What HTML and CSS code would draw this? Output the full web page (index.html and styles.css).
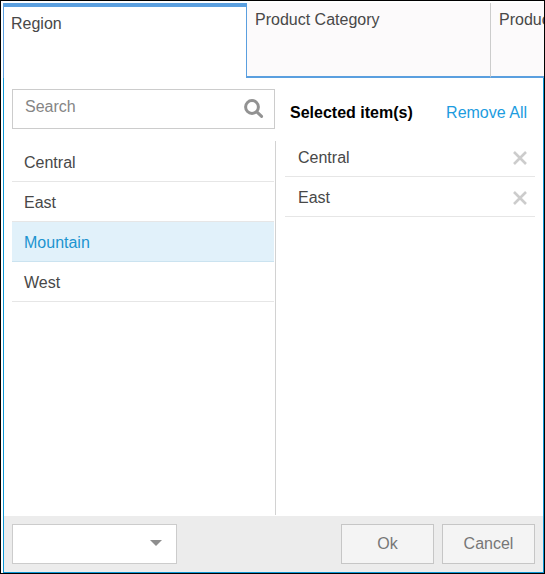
FILE: index.html
```html
<!DOCTYPE html>
<html lang="en">
<head>
<meta charset="utf-8">
<title>Region filter</title>
<link rel="stylesheet" href="styles.css">
</head>
<body>
<div class="frame">
  <div class="tabs" role="tablist">
    <button class="tab tab-active" type="button" role="tab" aria-selected="true">Region</button>
    <button class="tab" type="button" role="tab" aria-selected="false">Product Category</button>
    <button class="tab" type="button" role="tab" aria-selected="false">Product</button>
  </div>
  <form class="panel">
    <div class="columns">
      <section class="available">
        <div class="search">
          <input class="search-input" type="text" placeholder="Search" aria-label="Search">
          <svg class="search-icon" viewBox="0 0 20 20" aria-hidden="true"><circle cx="8" cy="8" r="6.4"/><path d="M12.8 12.8L17.6 17.4"/></svg>
        </div>
        <ul class="options">
          <li class="option">Central</li>
          <li class="option">East</li>
          <li class="option option-active">Mountain</li>
          <li class="option">West</li>
        </ul>
      </section>
      <section class="selected">
        <header class="selected-head">
          <h2 class="selected-title">Selected item(s)</h2>
          <a class="remove-all" href="#">Remove All</a>
        </header>
        <ul class="chosen">
          <li class="chosen-item">Central
            <button class="remove" type="button" aria-label="Remove Central"><svg viewBox="0 0 14 14" aria-hidden="true"><path d="M1 1L13 13M13 1L1 13"/></svg></button>
          </li>
          <li class="chosen-item">East
            <button class="remove" type="button" aria-label="Remove East"><svg viewBox="0 0 14 14" aria-hidden="true"><path d="M1 1L13 13M13 1L1 13"/></svg></button>
          </li>
        </ul>
      </section>
    </div>
    <footer class="footer">
      <div class="picker">
        <select class="picker-select" aria-label="Filter type"><option></option></select>
        <svg class="picker-arrow" viewBox="0 0 12 6" aria-hidden="true"><path d="M0 0H12L6 6Z"/></svg>
      </div>
      <div class="actions">
        <button class="action" type="button">Ok</button>
        <button class="action" type="button">Cancel</button>
      </div>
    </footer>
  </form>
</div>
</body>
</html>
```
FILE: styles.css
```css
* {
  box-sizing: border-box;
}

body {
  margin: 0;
  background: #fff;
  color: #484848;
  font: 16px/20px "Liberation Sans", Arial, sans-serif;
}

button,
input,
select {
  margin: 0;
  border-radius: 0;
  font: inherit;
}

.frame {
  display: flex;
  flex-direction: column;
  min-height: 100vh;
  padding: 2px 0 0 2px;
  border: 1px solid #000;
}

.tabs {
  display: flex;
  height: 75px;
  overflow: hidden;
}

.tab {
  display: flex;
  flex: 0 0 244px;
  align-items: flex-start;
  padding: 7px 8px;
  border: 0;
  border-right: 1px solid #ccc;
  border-bottom: 2px solid #5a9fdf;
  background: #fcfafb;
  color: #484848;
  text-align: left;
}

.tab-active {
  border-top: 4px solid #5a9fdf;
  border-right: 1px solid #5a9fdf;
  border-bottom: 0;
  border-left: 1px solid #5a9fdf;
  background: #fff;
  padding-left: 7px;
}

.panel {
  display: flex;
  flex: 1;
  flex-direction: column;
  border: 1px solid #0d96d3;
  border-top: 0;
}

.columns {
  display: flex;
  flex: 1;
  padding: 11px 8px 1px;
}

.available {
  display: flex;
  flex: 0 0 264px;
  flex-direction: column;
}

.search {
  display: flex;
  align-items: center;
  height: 40px;
  margin-right: 1px;
  padding: 0 10px 0 12px;
  border: 1px solid #ccc;
}

.search-input {
  flex: 1;
  min-width: 0;
  height: 34px;
  padding: 0 0 4px;
  border: 0;
  outline: 0;
  background: transparent;
  color: #484848;
}

.search-input::placeholder {
  color: #858585;
  opacity: 1;
}

.search-icon {
  width: 20px;
  height: 20px;
  fill: none;
  stroke: #929292;
  stroke-width: 3;
  stroke-linecap: round;
}

.options,
.chosen {
  margin: 0;
  padding: 0;
  list-style: none;
}

.options {
  flex: 1;
  margin-top: 12px;
  padding: 1px 1px 0 0;
  border-right: 1px solid #d2d2d2;
}

.option {
  height: 40px;
  padding: 11px 12px 8px;
  border-bottom: 1px solid #e6e6e6;
}

.option-active {
  border-bottom-color: #cbe3f0;
  background: #e1f1fa;
  color: #1c94d0;
}

.selected {
  flex: 1;
  margin-left: 9px;
}

.selected-head {
  display: flex;
  align-items: center;
  justify-content: space-between;
  height: 48px;
  padding: 0 8px 0 5px;
}

.selected-title {
  margin: 0;
  color: #000;
  font-size: 16px;
}

.remove-all {
  color: #1c9ce0;
  text-decoration: none;
}

.chosen-item {
  display: flex;
  align-items: center;
  justify-content: space-between;
  height: 40px;
  padding: 2px 8px 0 13px;
  border-bottom: 1px solid #e6e6e6;
}

.remove {
  width: 14px;
  height: 14px;
  padding: 0;
  border: 0;
  background: none;
}

.remove svg {
  display: block;
  fill: none;
  stroke: #ccc;
  stroke-width: 2.6;
}

.footer {
  display: flex;
  justify-content: space-between;
  padding: 8px;
  background: #ececec;
}

.picker {
  position: relative;
  width: 165px;
  height: 40px;
}

.picker-select {
  width: 100%;
  height: 100%;
  padding: 0 32px 0 12px;
  border: 1px solid #ccc;
  appearance: none;
  background: #fff;
}

.picker-arrow {
  position: absolute;
  top: 16px;
  right: 15px;
  width: 12px;
  height: 6px;
  fill: #8e8e8e;
  pointer-events: none;
}

.actions {
  display: flex;
  gap: 8px;
}

.action {
  width: 93px;
  height: 40px;
  padding: 0;
  border: 1px solid #c6c6c6;
  background: #f4f4f4;
  color: #777;
}
```
